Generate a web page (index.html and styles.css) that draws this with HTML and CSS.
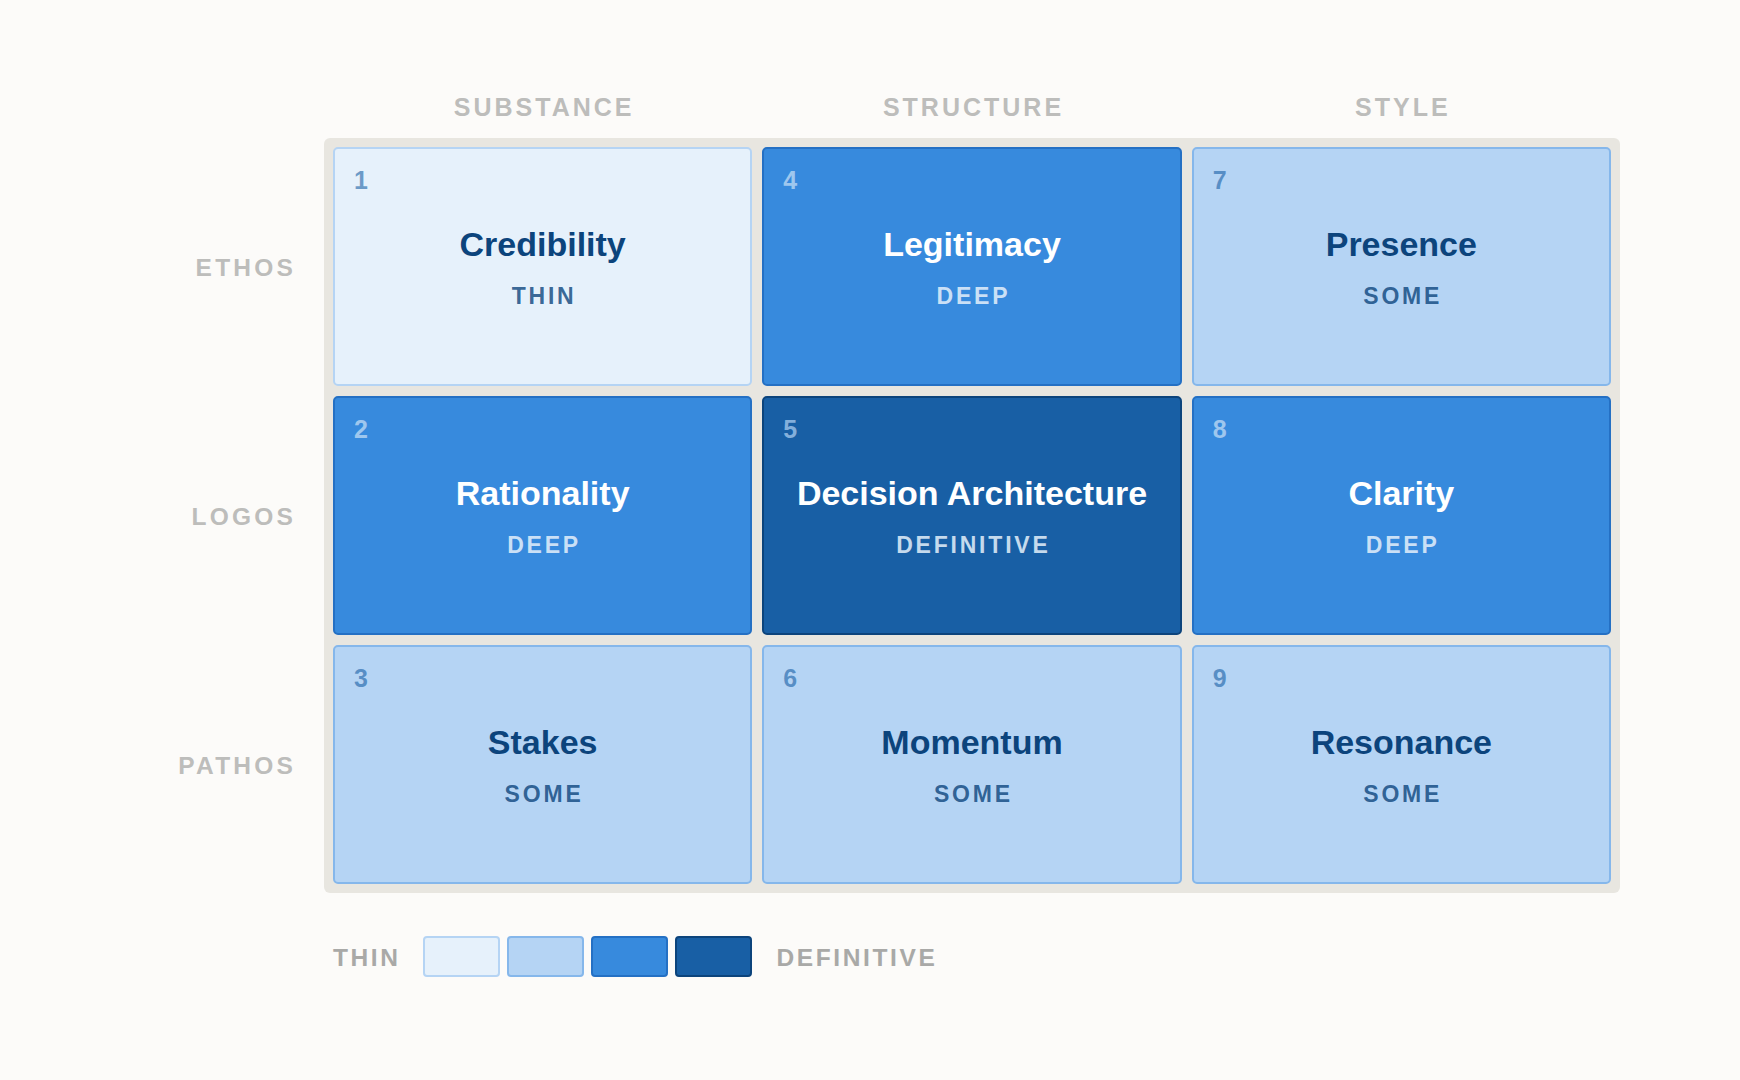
FILE: index.html
```html
<!DOCTYPE html>
<html lang="en">
<head>
<meta charset="utf-8">
<title>Rhetoric matrix</title>
<link rel="stylesheet" href="styles.css">
</head>
<body>
<div class="chart">
  <div class="corner"></div>
  <div class="col-heads">
    <div class="col-head">SUBSTANCE</div>
    <div class="col-head">STRUCTURE</div>
    <div class="col-head">STYLE</div>
  </div>

  <div class="row-heads">
    <div class="row-head">ETHOS</div>
    <div class="row-head">LOGOS</div>
    <div class="row-head">PATHOS</div>
  </div>

  <div class="matrix">
    <div class="cell thin"><span class="num">1</span><div class="title">Credibility</div><div class="level">THIN</div></div>
    <div class="cell deep"><span class="num">4</span><div class="title">Legitimacy</div><div class="level">DEEP</div></div>
    <div class="cell some"><span class="num">7</span><div class="title">Presence</div><div class="level">SOME</div></div>

    <div class="cell deep"><span class="num">2</span><div class="title">Rationality</div><div class="level">DEEP</div></div>
    <div class="cell definitive"><span class="num">5</span><div class="title">Decision Architecture</div><div class="level">DEFINITIVE</div></div>
    <div class="cell deep"><span class="num">8</span><div class="title">Clarity</div><div class="level">DEEP</div></div>

    <div class="cell some"><span class="num">3</span><div class="title">Stakes</div><div class="level">SOME</div></div>
    <div class="cell some"><span class="num">6</span><div class="title">Momentum</div><div class="level">SOME</div></div>
    <div class="cell some"><span class="num">9</span><div class="title">Resonance</div><div class="level">SOME</div></div>
  </div>

  <div class="corner"></div>
  <div class="legend">
    <span class="legend-label">THIN</span>
    <div class="swatches">
      <span class="swatch thin"></span>
      <span class="swatch some"></span>
      <span class="swatch deep"></span>
      <span class="swatch definitive"></span>
    </div>
    <span class="legend-label legend-end">DEFINITIVE</span>
  </div>
</div>
</body>
</html>
```

FILE: styles.css
```css
html, body {
  margin: 0;
  padding: 0;
}

body {
  background: #fcfbf9;
  font-family: "Liberation Sans", Arial, "Helvetica Neue", sans-serif;
  width: 1740px;
  height: 1080px;
  overflow: hidden;
}

.chart {
  display: grid;
  grid-template-columns: 296px 1296px;
  column-gap: 28px;
  padding-top: 93px;
}

/* column headers */
.col-heads {
  display: grid;
  grid-template-columns: repeat(3, 1fr);
  column-gap: 10px;
  padding: 0 9px;
  margin-bottom: 17px;
}

.col-head {
  text-align: center;
  font-size: 25px;
  line-height: 28px;
  font-weight: 700;
  letter-spacing: 3px;
  padding-left: 3px;
  color: #bdbdbb;
}

/* row headers */
.row-heads {
  display: grid;
  grid-template-rows: repeat(3, 239px);
  row-gap: 10px;
  padding: 9px 0;
}

.row-head {
  display: flex;
  align-items: center;
  justify-content: flex-end;
  padding-top: 2px;
  font-size: 24.5px;
  font-weight: 700;
  letter-spacing: 3.2px;
  color: #bdbdbb;
}

/* matrix */
.matrix {
  display: grid;
  grid-template-columns: repeat(3, 1fr);
  grid-template-rows: repeat(3, 239px);
  gap: 10px;
  padding: 9px;
  background: #e8e6e0;
  border-radius: 6px;
}

.cell {
  position: relative;
  box-sizing: border-box;
  border: 2px solid;
  border-radius: 5px;
  display: flex;
  flex-direction: column;
  align-items: center;
  justify-content: center;
}

.num {
  position: absolute;
  top: 19px;
  left: 19px;
  font-size: 25px;
  line-height: 1;
  font-weight: 700;
}

.title {
  font-size: 34px;
  line-height: 1.2;
  font-weight: 700;
}

.level {
  margin-top: 18px;
  margin-bottom: -2px;
  font-size: 23px;
  line-height: 1.2;
  font-weight: 700;
  letter-spacing: 2.8px;
  padding-left: 2.8px;
}

.cell.thin {
  background: #e6f1fb;
  border-color: #b5d4f4;
}
.cell.some {
  background: #b5d4f4;
  border-color: #85b7eb;
}
.cell.deep {
  background: #378add;
  border-color: #2470c4;
}
.cell.definitive {
  background: #185fa5;
  border-color: #0c447c;
}

.cell.thin .title,
.cell.some .title {
  color: #0c447c;
}
.cell.thin .level,
.cell.some .level {
  color: rgba(12, 68, 124, 0.8);
}
.cell.thin .num,
.cell.some .num {
  color: rgba(24, 95, 165, 0.6);
}

.cell.deep .title,
.cell.definitive .title {
  color: #ffffff;
}
.cell.deep .level,
.cell.definitive .level {
  color: rgba(230, 241, 251, 0.85);
}
.cell.deep .num {
  color: rgba(230, 241, 251, 0.6);
}
.cell.definitive .num {
  color: rgba(181, 212, 244, 0.7);
}

/* legend */
.legend {
  display: flex;
  align-items: center;
  gap: 22px;
  margin-top: 43px;
  padding-left: 9px;
}

.legend-label {
  padding-top: 2px;
  font-size: 24.5px;
  font-weight: 700;
  letter-spacing: 2.6px;
  color: #a9a9a7;
}

.legend-end {
  margin-left: 3px;
}

.swatches {
  display: flex;
  gap: 7px;
}

.swatch {
  box-sizing: border-box;
  width: 77px;
  height: 41px;
  border: 2px solid;
  border-radius: 4px;
}
.swatch.thin {
  background: #e6f1fb;
  border-color: #b5d4f4;
}
.swatch.some {
  background: #b5d4f4;
  border-color: #85b7eb;
}
.swatch.deep {
  background: #378add;
  border-color: #2470c4;
}
.swatch.definitive {
  background: #185fa5;
  border-color: #0c447c;
}
```
